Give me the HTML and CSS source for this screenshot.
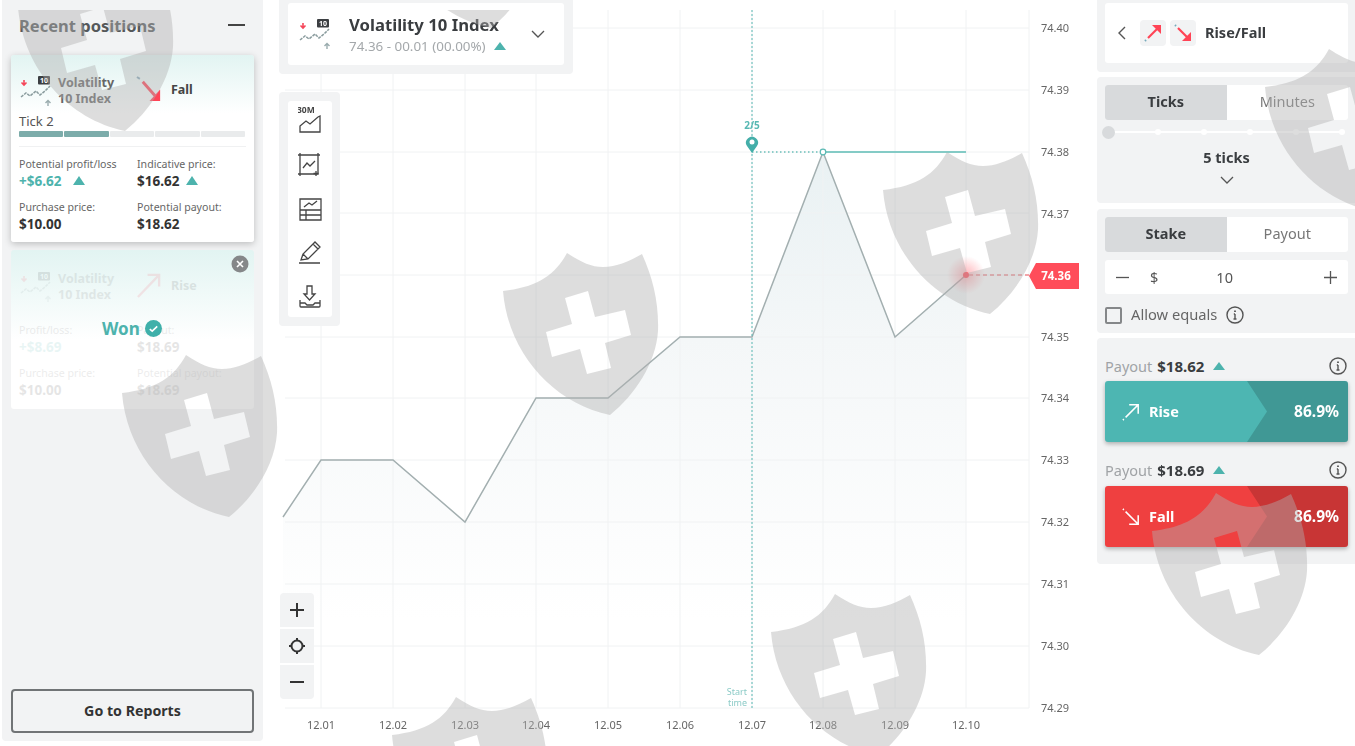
FILE: index.html
```html
<!DOCTYPE html>
<html lang="en">
<head>
<meta charset="utf-8">
<title>Volatility 10 Index</title>
<link rel="stylesheet" href="styles.css">
</head>
<body>
<div class="app">
  <aside class="positions">
    <header class="positions-head">
      <h2>Recent positions</h2>
      <span class="dash"></span>
    </header>
    <article class="card">
      <div class="card-top">
        <svg class="mkt" viewBox="0 0 32 32"><use href="#mkt-icon"/></svg>
        <div class="card-name">Volatility<br>10 Index</div>
        <svg class="dir" viewBox="0 0 28 28"><path d="M1 1l3 2" stroke="#8ab" stroke-width="2" fill="none"/><path d="M7 6l15 17" stroke="#ff4456" stroke-width="3" fill="none"/><path d="M25 14v12H14z" fill="#ff4456"/></svg>
        <div class="card-dir">Fall</div>
      </div>
      <div class="tick">Tick 2</div>
      <div class="progress"><i class="on"></i><i class="on"></i><i></i><i></i><i></i></div>
      <div class="stats">
        <div><label>Potential profit/loss</label><b class="pos">+$6.62 <s class="tri wide"></s></b></div>
        <div><label>Indicative price:</label><b>$16.62 <s class="tri"></s></b></div>
        <div><label>Purchase price:</label><b>$10.00</b></div>
        <div><label>Potential payout:</label><b>$18.62</b></div>
      </div>
    </article>
    <article class="card won">
      <div class="won-inner">
        <div class="card-top">
          <svg class="mkt" viewBox="0 0 32 32"><use href="#mkt-icon"/></svg>
          <div class="card-name">Volatility<br>10 Index</div>
          <svg class="dir" viewBox="0 0 28 28"><path d="M2 26L24 3M12 3h12v12" stroke="#f5475a" stroke-width="2.4" fill="none"/></svg>
          <div class="card-dir">Rise</div>
        </div>
        <div class="stats">
          <div><label>Profit/loss:</label><b class="pos">+$8.69</b></div>
          <div><label>Payout:</label><b>$18.69</b></div>
          <div><label>Purchase price:</label><b>$10.00</b></div>
          <div><label>Potential payout:</label><b>$18.69</b></div>
        </div>
      </div>
      <div class="won-label">Won
        <svg class="won-check" viewBox="0 0 16 16"><circle cx="8" cy="8" r="8" fill="#3fb0aa"/><path d="M4.500 8.500l2.300 2 4.700-4.500" stroke="#fff" stroke-width="1.500" fill="none"/></svg>
      </div>
      <svg class="won-close" viewBox="0 0 18 18"><circle cx="9" cy="9" r="8.500" fill="#858789"/><path d="M6 6l6 6M12 6l-6 6" stroke="#fff" stroke-width="1.600"/></svg>
    </article>
    <button class="reports">Go to Reports</button>
  </aside>

  <main class="chart">
    <svg class="plot" viewBox="263 0 834 746">
      <defs>
        <linearGradient id="area" x1="0" y1="0" x2="0" y2="1">
          <stop offset="0" stop-color="#e9f1f3"/>
          <stop offset=".4" stop-color="#f4f7f8"/>
          <stop offset="1" stop-color="#fff"/>
        </linearGradient>
        <radialGradient id="glow">
          <stop offset="0" stop-color="#ff4d5a" stop-opacity=".42"/>
          <stop offset="1" stop-color="#ff4d5a" stop-opacity="0"/>
        </radialGradient>
      </defs>
      <path class="area" d="M283 517L321 460H393L465 522L536 398H608L680 337H752L823 152L895 337L966 275V620H283Z"/>
      <path class="grid" d="M321 10V708M393 10V708M465 10V708M536 10V708M608 10V708M680 10V708M752 10V708M823 10V708M895 10V708M966 10V708M1029 10V708M285 28H1029M285 90H1029M285 152H1029M285 213H1029M285 275H1029M285 337H1029M285 398H1029M285 460H1029M285 522H1029M285 584H1029M285 646H1029M285 708H1029"/>
      <path class="line" d="M283 517L321 460H393L465 522L536 398H608L680 337H752L823 152L895 337L966 275"/>
      <path class="start" d="M752 10V708"/>
      <path class="dots" d="M752 152H820"/>
      <path class="barrier" d="M826 152H966"/>
      <circle class="spot-open" cx="823" cy="152" r="2.800"/>
      <path class="pin" d="M752 153l-5-7a6 6 0 1 1 10 0z"/>
      <circle class="pin-eye" cx="752" cy="142" r="2.500"/>
      <text class="progress-label" x="752" y="129">2/5</text>
      <text class="start-label" x="747" y="695">Start</text>
      <text class="start-label" x="747" y="706">time</text>
      <circle cx="966" cy="275" r="19" fill="url(#glow)"/>
      <circle class="spot" cx="966" cy="275" r="3"/>
      <path class="spot-dash" d="M969 275H1029"/>
      <path class="spot" d="M1029 276l7-13h43v26h-43z"/>
      <text class="spot-text" x="1056" y="280">74.36</text>
      <g class="y-axis">
        <text x="1041" y="32">74.40</text><text x="1041" y="94">74.39</text><text x="1041" y="156">74.38</text><text x="1041" y="218">74.37</text>
        <text x="1041" y="341">74.35</text><text x="1041" y="402">74.34</text><text x="1041" y="464">74.33</text><text x="1041" y="526">74.32</text>
        <text x="1041" y="588">74.31</text><text x="1041" y="650">74.30</text><text x="1041" y="712">74.29</text>
      </g>
      <g class="x-axis">
        <text x="321" y="729">12.01</text><text x="393" y="729">12.02</text><text x="465" y="729">12.03</text><text x="536" y="729">12.04</text><text x="608" y="729">12.05</text>
        <text x="680" y="729">12.06</text><text x="752" y="729">12.07</text><text x="823" y="729">12.08</text><text x="895" y="729">12.09</text><text x="966" y="729">12.10</text>
      </g>
    </svg>

    <div class="market">
      <div class="market-inner">
        <svg class="market-icon" viewBox="0 0 32 32"><use href="#mkt-icon"/></svg>
        <div class="market-text">
          <div class="market-name">Volatility 10 Index</div>
          <div class="market-sub">74.36 - 00.01 (00.00%) <s class="tri big"></s></div>
        </div>
        <svg class="chev" viewBox="0 0 14 8"><path d="M1 1l6 6 6-6"/></svg>
      </div>
    </div>

    <div class="tools">
      <div class="tools-inner">
        <svg class="tool-first" viewBox="0 -4 24 28"><text class="tool-text" x="-1" y="4">30M</text><path d="M2 23V17L8 12l4 3 8-7 2-1V23z"/></svg>
        <svg viewBox="0 0 24 24"><path d="M2 2H20V21H2zM0 2h4M18 2h4M2 0V4M20 0V4M0 21h4M2 19v4"/><path d="M5 15l4-5 3 3 5-5"/><path d="M18 18v5M15.500 20.500h5"/></svg>
        <svg viewBox="0 0 24 24"><path d="M2 2H23V23H2zM2 13H23M2 18H23M8 13V23M6 10l5-4 3 2 5-4"/></svg>
        <svg viewBox="0 0 24 24"><path d="M3 19l2-6L17 1l5 5-12 12zM5 13l5 5M15 3l5 5M1 22H22"/></svg>
        <svg viewBox="0 0 24 24"><path d="M9 1h5v8h3l-5.500 6L6 9h3zM2 15v6a1 1 0 0 0 1 1H21a1 1 0 0 0 1-1V15M2 18H7l2 2H15l2-2H22"/></svg>
      </div>
    </div>

    <div class="zoom">
      <button><svg viewBox="0 0 14 14"><path d="M7 0V14M0 7H14"/></svg></button>
      <button><svg viewBox="0 0 16 16"><circle cx="8" cy="8" r="5.500"/><path d="M8 0V2M8 14v2M0 8H2M14 8h2"/></svg></button>
      <button><svg viewBox="0 0 14 14"><path d="M0 7H14"/></svg></button>
    </div>
  </main>

  <aside class="trade">
    <section class="panel panel-type">
      <div class="type-box">
        <svg class="back" viewBox="0 0 8 14"><path d="M7 1L1 7l6 6"/></svg>
        <span class="type-icon"><svg viewBox="0 0 20 20"><path d="M2 18l1-1" stroke="#7ab" stroke-width="2"/><path d="M5 15L16 4" stroke="#ff4456" stroke-width="2.200"/><path d="M9 2h9v9z" fill="#ff4456"/></svg></span>
        <span class="type-icon"><svg viewBox="0 0 20 20"><path d="M2 2l1 1" stroke="#7ab" stroke-width="2"/><path d="M5 5L16 16" stroke="#ff4456" stroke-width="2.200"/><path d="M9 18h9V9z" fill="#ff4456"/></svg></span>
        <b class="type-name">Rise/Fall</b>
      </div>
    </section>
    <section class="panel panel-ticks">
      <div class="toggle"><span class="active">Ticks</span><span>Minutes</span></div>
      <div class="slider"><i class="knob"></i><i></i><i></i><i></i><i></i><i></i></div>
      <div class="ticks-value">5 ticks</div>
      <svg class="ticks-chev" viewBox="0 0 14 8"><path d="M1 1l6 6 6-6"/></svg>
    </section>
    <section class="panel panel-stake">
      <div class="toggle"><span class="active">Stake</span><span>Payout</span></div>
      <div class="amount">
        <svg viewBox="0 0 14 14"><path d="M0 7H14"/></svg>
        <span class="cur">$</span>
        <span class="val">10</span>
        <svg viewBox="0 0 14 14"><path d="M7 0V14M0 7H14"/></svg>
      </div>
      <div class="equals"><span class="check"></span><span class="equals-text">Allow equals</span><svg class="info" viewBox="0 0 18 18"><use href="#info-icon"/></svg></div>
    </section>
    <section class="panel panel-buy">
      <div class="payout"><span>Payout</span> <b>$18.62</b> <s class="tri big"></s><svg class="info end" viewBox="0 0 18 18"><use href="#info-icon"/></svg></div>
      <button class="buy rise">
        <svg viewBox="0 0 20 20"><path d="M1 19l2-2" stroke-dasharray="1.500 1.500"/><path d="M4 16L18 2M8 2h10v10"/></svg>
        <span>Rise</span><em>86.9%</em>
      </button>
      <div class="payout second"><span>Payout</span> <b>$18.69</b> <s class="tri big"></s><svg class="info end" viewBox="0 0 18 18"><use href="#info-icon"/></svg></div>
      <button class="buy fall">
        <svg viewBox="0 0 20 20"><path d="M1 1l2 2" stroke-dasharray="1.500 1.500"/><path d="M4 4L18 18M8 18h10V8"/></svg>
        <span>Fall</span><em>86.9%</em>
      </button>
    </section>
  </aside>
</div>

<svg class="defs" aria-hidden="true">
  <defs>
    <g id="mkt-icon">
      <path d="M4 5v5M1.500 7.500L4 10l2.500-2.500" stroke="#f5475a" stroke-width="1.600" fill="none"/>
      <rect x="18" y="1" width="12" height="8.500" rx="1" fill="#3c3f42"/>
      <text x="24" y="7.800" font-size="7" font-weight="700" fill="#fff" text-anchor="middle" font-family="Noto Sans, sans-serif">10</text>
      <path d="M1 22l5-4 4 3 6-5 4 4 5-4 5-5" stroke="#8a9c9e" stroke-width="1.500" fill="none" stroke-dasharray="3 1"/>
      <path d="M28 31v-5M25.500 28L28 25.500 30.500 28" stroke="#9aacae" stroke-width="1.400" fill="none"/>
    </g>
    <g id="info-icon" fill="none" stroke="#555" stroke-width="1.400">
      <circle cx="9" cy="9" r="8"/><path d="M9 8v5M7.500 13h3M7.800 8H9"/><path d="M9 4.500v1.600" stroke-width="1.800"/>
    </g>
  </defs>
</svg>

<svg class="watermarks" viewBox="0 0 1355 746" aria-hidden="true">
  <defs>
    <path id="shield" fill-rule="evenodd" d="M0 38C35 34 52 22 64 0C78 9 88 14 100 14C113 14 127 8 139 1C150 25 156 50 155 78C153 110 132 142 107 162C50 150 5 100 0 38ZM62 45L85 38L92 64L122 57L128 82L102 90L108 115L84 121L77 96L49 104L43 79L69 71Z"/>
    <clipPath id="below-top"><rect x="0" y="10" width="1355" height="736"/></clipPath>
  </defs>
  <g class="wm" clip-path="url(#below-top)">
    <use href="#shield" x="18" y="-31"/>
    <use href="#shield" x="384" y="-134"/>
  </g>
  <g class="wm">
    <use href="#shield" x="883" y="152"/>
    <use href="#shield" x="503" y="253"/>
    <use href="#shield" x="122" y="355"/>
    <use href="#shield" x="771" y="594"/>
    <use href="#shield" x="1152" y="493"/>
    <use href="#shield" x="1265" y="49"/>
    <use href="#shield" x="392" y="697"/>
  </g>
</svg>
</body>
</html>
```
FILE: styles.css
```css
* { box-sizing: border-box; }
html, body { margin: 0; height: 100%; }
body {
  width: 1355px; height: 746px; overflow: hidden; position: relative;
  background: #fff; color: #333;
  font-family: "Noto Sans", "Liberation Sans", sans-serif;
}
s { text-decoration: none; }
button { font-family: inherit; cursor: pointer; }
.defs { position: absolute; width: 0; height: 0; }

.app { display: grid; grid-template-columns: 263px 834px 258px; height: 746px; filter: blur(.35px); }

/* left */
.positions {
  margin: 0 0 5px 2px; background: #f2f3f4; border-radius: 0 0 4px 4px;
  padding: 0 9px 8px; display: flex; flex-direction: column;
}
.positions-head { height: 55px; display: flex; align-items: center; justify-content: space-between; padding: 0 9px 5px 8px; }
.positions-head h2 { margin: 0; font-size: 16.500px; font-weight: 700; color: #55585a; }
.dash { width: 17px; height: 2px; background: #444; }

.card {
  position: relative; background: linear-gradient(#e2f4f2, #fff 58px); border-radius: 3px;
  height: 187px; padding: 20px 8px 0; box-shadow: 0 2px 7px rgba(0,0,0,.22);
}
.card-top { display: flex; align-items: center; height: 32px; }
.mkt { width: 32px; height: 32px; flex: none; margin: 0 6px 0 1px; }
.card-name { width: 78px; font-size: 12.500px; line-height: 16px; font-weight: 700; color: #666; }
.dir { width: 27px; height: 27px; flex: none; margin-top: -3px; }
.card-dir { margin-left: 8px; margin-top: -4px; font-size: 12.500px; font-weight: 700; color: #444; }
.tick { margin-top: 5px; font-size: 13px; line-height: 18px; color: #555; }
.progress { display: flex; gap: 1px; height: 6px; margin: 1px 1px 0 0; }
.progress i { flex: 1; background: #e9ebec; border-radius: 1px; }
.progress .on { background: #7cacaa; }
.stats {
  display: grid; grid-template-columns: 118px 1fr; row-gap: 8px;
  margin-top: 9px; padding-top: 9px; border-top: 1px solid #f0f1f2;
}
.stats label { display: block; font-size: 10.600px; line-height: 16px; color: #666; white-space: nowrap; }
.stats b { display: block; font-size: 13.500px; line-height: 19px; color: #333; white-space: nowrap; }
.stats .pos { color: #4db3ad; }
.tri { display: inline-block; width: 0; height: 0; margin-left: 3px; vertical-align: 1px; border-left: 6px solid transparent; border-right: 6px solid transparent; border-bottom: 9px solid #4db3ad; }
.tri.wide { margin-left: 8px; }
.tri.big { margin-left: 4px; border-bottom-width: 8px; vertical-align: 1px; }

.card.won { margin-top: 8px; height: 159px; padding-top: 21px; background: linear-gradient(#e2f4f2, #fff 90px); box-shadow: none; }
.won-inner { opacity: .12; }
.won-inner .stats { margin-top: 19px; border-top: 0; padding-top: 0; }
.won-label {
  position: absolute; left: 91px; top: 67px; display: flex; align-items: center; gap: 5px;
  font-size: 17px; font-weight: 700; color: #4db3ad;
}
.won-check { width: 17px; height: 17px; }
.won-close { position: absolute; right: 5px; top: 5px; width: 18px; height: 18px; }
.reports {
  margin-top: auto; height: 44px; width: 243px; background: transparent; padding: 0 0 2px;
  border: 2px solid #717476; border-radius: 4px; font-size: 14.200px; font-weight: 700; color: #333;
}

/* chart */
.chart { position: relative; }
.plot { display: block; width: 834px; height: 746px; font-family: "Noto Sans", "Liberation Sans", sans-serif; }
.grid { stroke: #f0f2f3; stroke-width: 1; fill: none; }
.area { fill: url(#area); }
.line { fill: none; stroke: #a3afb0; stroke-width: 1.500; }
.start { stroke: #58b8b3; stroke-width: 1; stroke-dasharray: 2 2; fill: none; }
.dots { stroke: #6cc0bb; stroke-width: 1.300; stroke-dasharray: 1.500 2.500; fill: none; }
.barrier { stroke: #84cbc6; stroke-width: 2; fill: none; }
.spot-open { fill: #fff; stroke: #5bb9b4; stroke-width: 1.200; }
.pin { fill: #44aea9; }
.pin-eye { fill: #fff; }
.progress-label { font-size: 10px; font-weight: 700; fill: #58b8b3; text-anchor: middle; }
.start-label { font-size: 9px; fill: #8ccbc7; text-anchor: end; }
.spot { fill: #ff4d5a; }
.spot-dash { stroke: #f08a90; stroke-width: 1.300; stroke-dasharray: 4 3; fill: none; }
.spot-text { font-size: 11.500px; font-weight: 700; fill: #fff; text-anchor: middle; }
.y-axis text { font-size: 11px; fill: #666; }
.x-axis text { font-size: 11px; fill: #666; text-anchor: middle; }

.market {
  position: absolute; left: 16px; top: 0; width: 294px; height: 74px;
  background: #f2f3f4; border-radius: 0 0 4px 4px; padding: 3px 9px 9px;
}
.market-inner { height: 62px; background: #fff; border-radius: 3px; display: flex; align-items: center; padding: 0 19px 0 11px; }
.market-icon { width: 32px; height: 32px; flex: none; margin-right: 18px; }
.market-text { flex: 1; }
.market-name { font-size: 16.700px; line-height: 24px; font-weight: 700; color: #3a3d40; white-space: nowrap; }
.market-sub { font-size: 13.400px; line-height: 19px; color: #a4a8ab; white-space: nowrap; }
.market-sub .tri { margin-left: 5px; }
.chev { width: 14px; height: 8px; fill: none; stroke: #555; stroke-width: 1.300; }

.tools { position: absolute; left: 16px; top: 92px; width: 61px; height: 234px; background: #f2f3f4; border-radius: 4px; padding: 9px 8px 9px 9px; }
.tools-inner { height: 216px; background: #fff; border-radius: 3px; display: flex; flex-direction: column; align-items: center; gap: 20px; padding-top: 8px; }
.tools-inner svg { width: 24px; height: 24px; fill: none; stroke: #444; stroke-width: 1.300; flex: none; }
.tools-inner .tool-first { height: 28px; margin-top: -4px; }
.tool-text { font-size: 8.500px; font-weight: 700; fill: #444; stroke: none; }

.zoom { position: absolute; left: 17px; top: 593px; width: 34px; display: flex; flex-direction: column; gap: 2px; }
.zoom button { height: 34px; border: 0; padding: 0; background: #f2f3f4; display: flex; align-items: center; justify-content: center; }
.zoom button:first-child { border-radius: 4px 4px 0 0; }
.zoom button:last-child { border-radius: 0 0 4px 4px; }
.zoom svg { width: 14px; height: 14px; fill: none; stroke: #333; stroke-width: 2; }
.zoom button:nth-child(2) svg { width: 16px; height: 16px; }

/* right */
.trade { display: flex; flex-direction: column; gap: 5px; }
.panel { background: #f2f3f4; border-radius: 4px 0 0 4px; padding: 8px 7px 0 8px; }
.panel-type { height: 72px; padding-top: 3px; border-radius: 0 0 0 4px; }
.type-box { height: 60px; background: #fff; border-radius: 3px; display: flex; align-items: center; padding-left: 13px; }
.back { width: 8px; height: 14px; fill: none; stroke: #555; stroke-width: 1.400; margin-right: 14px; }
.type-icon { width: 26px; height: 26px; margin-right: 4px; background: #f2f3f4; border-radius: 4px; display: flex; align-items: center; justify-content: center; }
.type-icon svg { width: 20px; height: 20px; }
.type-name { margin-left: 5px; padding-bottom: 2px; font-size: 14.500px; color: #3a3d40; }
.panel-ticks { height: 126px; }
.panel-stake { height: 124px; margin-top: 1px; }
.toggle { height: 35px; display: grid; grid-template-columns: 1fr 1fr; background: #fff; border-radius: 3px; overflow: hidden; font-size: 14.500px; color: #777; }
.toggle span { display: flex; align-items: center; justify-content: center; padding-bottom: 3px; }
.toggle .active { background: #d8dadc; font-weight: 700; color: #3a3d40; }
.slider { position: relative; height: 2px; margin: 11px 3px 0; background: #fff; display: flex; justify-content: space-between; align-items: center; }
.slider i { width: 6px; height: 6px; border-radius: 50%; background: #fff; }
.slider .knob { width: 13px; height: 13px; margin-left: -6px; background: #d8dadc; }
.ticks-value { margin-top: 14px; text-align: center; font-size: 14.500px; line-height: 20px; font-weight: 700; color: #3a3d40; }
.ticks-chev { display: block; width: 14px; height: 8px; margin: 9px auto 0; fill: none; stroke: #555; stroke-width: 1.300; }
.amount { height: 34px; margin-top: 8px; background: #fff; border-radius: 3px; display: flex; align-items: center; padding: 0 11px; font-size: 14.500px; color: #555; }
.amount svg { width: 13px; height: 13px; flex: none; fill: none; stroke: #555; stroke-width: 1.400; }
.cur { margin-left: 21px; }
.val { flex: 1; text-align: center; padding-right: 33px; }
.equals { display: flex; align-items: center; margin-top: 10px; font-size: 14.700px; color: #666; }
.equals-text { padding-bottom: 2px; }
.check { width: 17px; height: 17px; border: 2px solid #858789; border-radius: 2px; margin-right: 9px; }
.info { width: 18px; height: 18px; margin-left: 9px; }
.info.end { margin-left: auto; margin-right: 1px; margin-top: 0; }
.panel-buy { height: 226px; padding-top: 18px; border-radius: 4px 0 0 4px; }
.payout { display: flex; align-items: center; gap: 5px; height: 25px; padding-bottom: 6px; font-size: 14.500px; color: #a0a3a6; }
.payout b { color: #3a3d40; font-size: 15px; }
.payout.second { margin-top: 17px; height: 27px; }
.buy {
  position: relative; display: flex; align-items: center; width: 243px; height: 61px; border: 0; padding: 0 9px 0 17px; color: #fff;
  border-radius: 3px; box-shadow: 0 2px 4px rgba(0,0,0,.28); overflow: hidden; font-size: 14.500px; font-weight: 700;
}
.buy::before {
  content: ""; position: absolute; right: 0; top: 0; bottom: 0; width: 101px;
  clip-path: polygon(0 0, 100% 0, 100% 100%, 0 100%, 20px 50%); background: rgba(0,0,0,.16);
}
.buy svg { position: relative; width: 18px; height: 18px; fill: none; stroke: #fff; stroke-width: 1.700; margin-right: 9px; flex: none; }
.buy span { position: relative; padding-bottom: 2px; }
.buy em { position: relative; margin-left: auto; padding-bottom: 2px; font-style: normal; font-size: 15.500px; }
.rise { background: #4db6b2; }
.fall { background: #ef4040; }

/* overlay */
.watermarks { position: absolute; left: 0; top: 0; width: 1355px; height: 746px; pointer-events: none; }
.wm { fill: rgba(176,176,176,.43); }
```
